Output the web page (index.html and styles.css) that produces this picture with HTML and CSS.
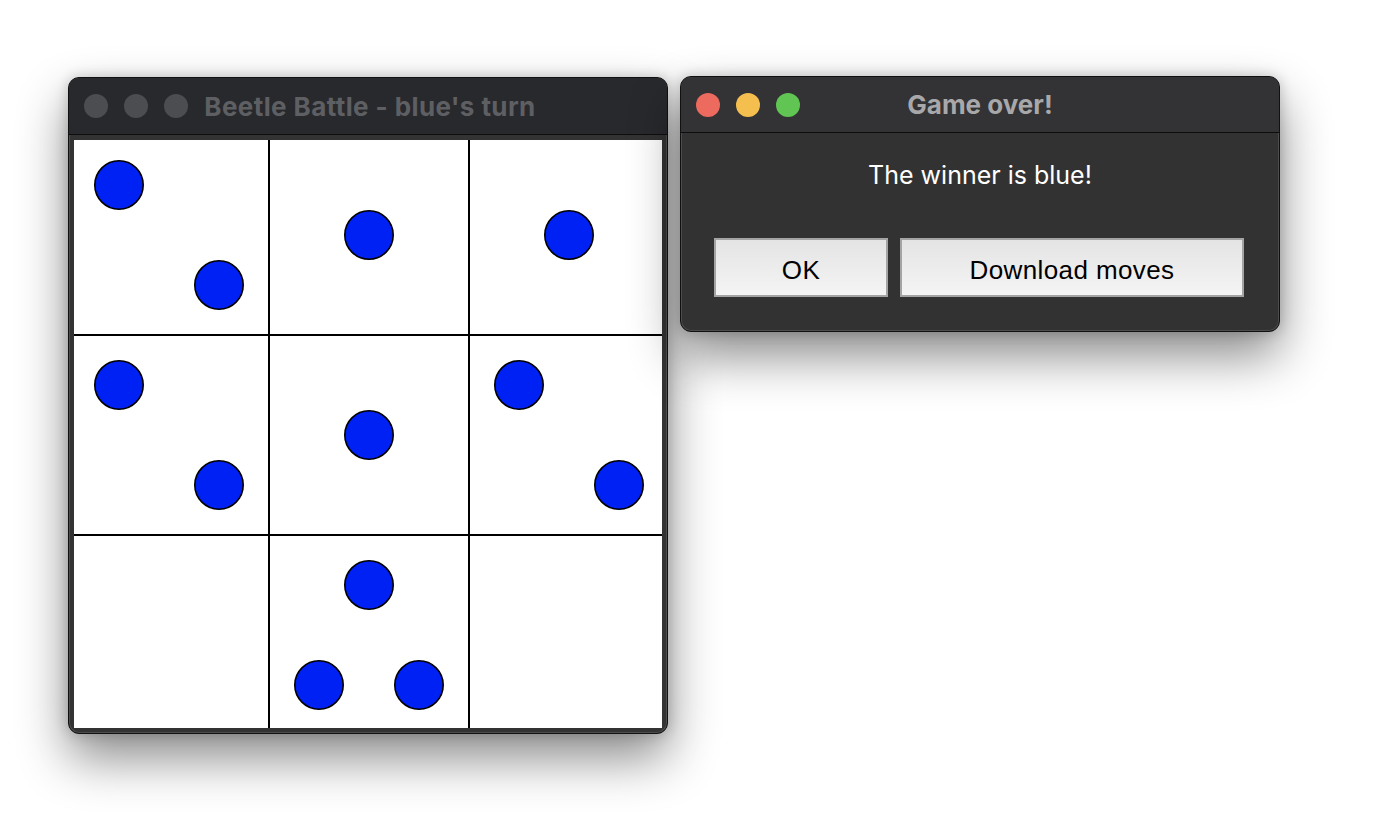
FILE: index.html
```html
<!DOCTYPE html>
<html>
<head>
<meta charset="utf-8">
<title>Beetle Battle</title>
<link rel="stylesheet" href="styles.css">
</head>
<body>
<div class="desk">
  <div class="win game">
    <div class="titlebar">
      <div class="lights">
        <span class="light off"></span><span class="light off"></span><span class="light off"></span>
      </div>
      <div class="title">Beetle Battle - blue's turn</div>
      <div></div>
    </div>
    <div class="frame">
      <svg class="board" width="588" height="588" viewBox="5 5 588 588" xmlns="http://www.w3.org/2000/svg">
        <rect x="0" y="0" width="600" height="600" fill="#fff"/>
        <g stroke="#000" stroke-width="2">
          <line x1="200" y1="0" x2="200" y2="600"/>
          <line x1="400" y1="0" x2="400" y2="600"/>
          <line x1="0" y1="200" x2="600" y2="200"/>
          <line x1="0" y1="400" x2="600" y2="400"/>
        </g>
        <g fill="#0021f3" stroke="#000" stroke-width="1.6">
          <circle cx="50" cy="50" r="24.2"/>
          <circle cx="150" cy="150" r="24.2"/>
          <circle cx="300" cy="100" r="24.2"/>
          <circle cx="500" cy="100" r="24.2"/>
          <circle cx="50" cy="250" r="24.2"/>
          <circle cx="150" cy="350" r="24.2"/>
          <circle cx="300" cy="300" r="24.2"/>
          <circle cx="450" cy="250" r="24.2"/>
          <circle cx="550" cy="350" r="24.2"/>
          <circle cx="300" cy="450" r="24.2"/>
          <circle cx="250" cy="550" r="24.2"/>
          <circle cx="350" cy="550" r="24.2"/>
        </g>
      </svg>
    </div>
  </div>
  <div class="win dialog">
    <div class="titlebar">
      <div class="lights">
        <span class="light red"></span><span class="light yellow"></span><span class="light green"></span>
      </div>
      <div class="title">Game over!</div>
      <div></div>
    </div>
    <div class="body">
      <div class="message">The winner is blue!</div>
      <div class="buttons">
        <button class="btn ok">OK</button>
        <button class="btn dl">Download moves</button>
      </div>
    </div>
  </div>
</div>
</body>
</html>
```

FILE: styles.css
```css
html, body {
  margin: 0;
  padding: 0;
  background: #ffffff;
  min-height: 818px;
}

.desk {
  display: flex;
  align-items: flex-start;
  gap: 10px;
  min-height: 818px;
  box-sizing: border-box;
  padding: 76px 0 0 68px;
  font-family: Inter, "Liberation Sans", sans-serif;
}

.win {
  box-sizing: border-box;
  width: 600px;
  border: 1px solid #111;
  border-radius: 11px;
  overflow: hidden;
  box-shadow: inset 0 0 0 1px rgba(255,255,255,0.13), 0 24px 50px rgba(0,0,0,0.46), 0 0 14px rgba(0,0,0,0.2);
}

.game {
  margin-top: 1px;
  background: #333333;
}

.dialog {
  margin-left: 2px;
  background: #323232;
}

.titlebar {
  display: grid;
  grid-template-columns: 1fr auto 1fr;
  align-items: center;
  height: 56px;
  border-bottom: 1px solid #0e0e0e;
}

.game .titlebar {
  background: #28292d;
}

.dialog .titlebar {
  height: 55px;
  background: #333234;
}

.lights {
  display: flex;
  gap: 16px;
  padding-left: 15px;
}

.light {
  width: 24px;
  height: 24px;
  border-radius: 50%;
}

.light.off { background: #4c4d51; }
.light.red { background: #ed6a5e; }
.light.yellow { background: #f5bf4f; }
.light.green { background: #61c554; }

.title {
  font-weight: 700;
  font-size: 26px;
  letter-spacing: 0;
}

.game .title {
  color: #5e5f63;
  padding-left: 4px;
  letter-spacing: 0.4px;
}

.dialog .title {
  color: #a8a8aa;
}

.frame {
  padding: 5px;
  display: flex;
}

.board {
  display: block;
}

.body {
  display: flex;
  flex-direction: column;
  align-items: center;
  height: 198px;
  box-sizing: border-box;
  padding-top: 27px;
}

.message {
  color: #ffffff;
  font-size: 25px;
  line-height: 30px;
}

.buttons {
  display: flex;
  gap: 12px;
  margin-top: 48px;
  margin-left: -2px;
}

.btn {
  box-sizing: border-box;
  height: 59px;
  border: 2px solid #a4a4a4;
  background: linear-gradient(#e4e4e4, #f4f4f4);
  font-family: "Liberation Sans", Arial, sans-serif;
  font-size: 26px;
  letter-spacing: 0.4px;
  color: #000;
  padding: 5px 0 0;
}

.btn.ok { width: 174px; }
.btn.dl { width: 344px; }
```
